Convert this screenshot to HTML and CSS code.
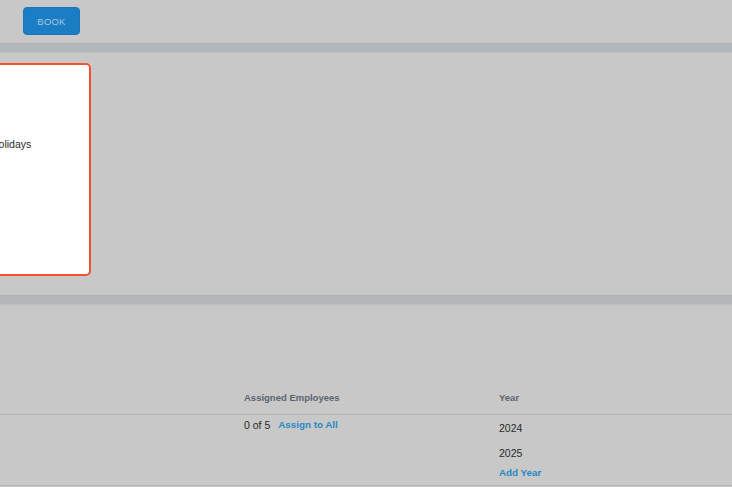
FILE: index.html
```html
<!DOCTYPE html>
<html lang="en">
<head>
    <meta charset="UTF-8">
    <meta name="viewport" content="width=device-width, initial-scale=1.0">
    <title>Holidays</title>
    <link rel="stylesheet" href="styles.css">
</head>
<body>
    <div class="toolbar">
        <button type="button" class="book">Book</button>
    </div>

    <div class="divider"></div>

    <div class="cards">
        <div class="card selected">
            <p class="card-title">Holidays</p>
        </div>
    </div>

    <div class="divider"></div>

    <div class="list">
        <div class="list-head">
            <span></span>
            <span>Assigned Employees</span>
            <span>Year</span>
        </div>
        <div class="list-row">
            <span></span>
            <div class="assigned">
                <span>0 of 5</span>
                <a href="#" class="link">Assign to All</a>
            </div>
            <div class="years">
                <span class="year">2024</span>
                <span class="year second">2025</span>
                <a href="#" class="link add">Add Year</a>
            </div>
        </div>
    </div>
</body>
</html>
```

FILE: styles.css
```css
*{
    margin: 0;
    padding: 0;
    box-sizing: border-box;
}

body{
    background-color: #c8c8c8;
    font-family: "Liberation Sans", Arial, sans-serif;
    color: #2a2a2a;
    overflow: hidden;
}

.toolbar{
    height: 43px;
    padding: 7px 0 0 23px;
}

.book{
    width: 57px;
    height: 28px;
    background-color: #1b7ec4;
    color: #a6c6e2;
    border: 1px solid #1876b8;
    border-radius: 4px;
    font-family: inherit;
    font-size: 9.5px;
    letter-spacing: 0.2px;
    text-transform: uppercase;
    cursor: pointer;
}

.divider{
    height: 10px;
    background-color: #b3b7ba;
    border-top: 1px solid #adb1b4;
    border-bottom: 1px solid #bcbfc1;
}

.cards{
    display: flex;
    padding: 10px 0 19px;
}

.card{
    width: 181px;
    height: 213px;
    margin-left: -90px;
    background-color: #fff;
    border-radius: 5px;
}

.card.selected{
    border: 2px solid #f8502f;
}

.card-title{
    font-size: 10.5px;
    line-height: 14px;
    padding: 72px 0 0 79px;
    color: #2a2a2a;
}

.list{
    padding-top: 75px;
}

.list-head,
.list-row{
    display: grid;
    grid-template-columns: 244px 255px 1fr;
    border-bottom: 1px solid #b6b6b6;
}

.list-head{
    height: 35px;
    align-items: center;
    font-size: 9.5px;
    font-weight: bold;
    color: #5c6570;
}

.list-row{
    font-size: 10.5px;
    line-height: 14px;
}

.assigned{
    display: flex;
    gap: 8px;
    padding-top: 3px;
}

.link{
    color: #2688c4;
    font-weight: bold;
    font-size: 9.8px;
    text-decoration: none;
}

.years{
    display: flex;
    flex-direction: column;
    align-items: flex-start;
    padding: 6px 0 5px;
}

.year.second{
    margin-top: 11px;
}

.link.add{
    margin-top: 6px;
}
```
